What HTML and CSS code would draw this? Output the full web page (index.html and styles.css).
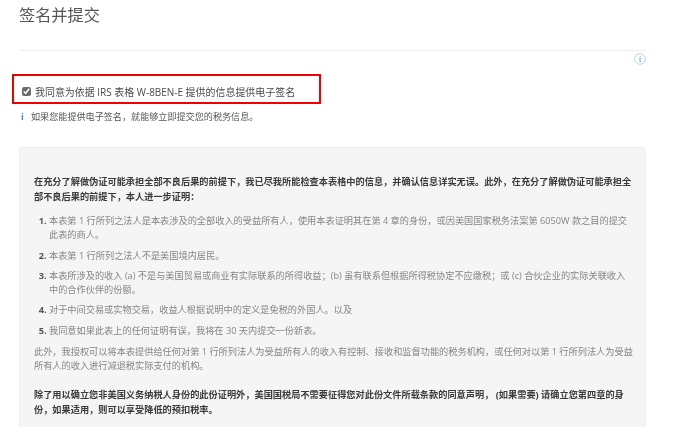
FILE: index.html
```html
<!DOCTYPE html>
<html lang="zh-CN">
<head>
<meta charset="utf-8">
<title>签名并提交</title>
<link rel="stylesheet" href="styles.css">
</head>
<body>
<main class="page">
  <h1 class="title">签名并提交</h1>
  <div class="rule-row">
    <svg class="info-circle" viewBox="0 0 12 12" aria-hidden="true">
      <circle cx="6" cy="6" r="5.3" fill="none" stroke="#9fcbe3" stroke-width="0.8"/>
      <path d="M6.3 2.9v.9M5.3 5.2h1l-.5 3.3h1" fill="none" stroke="#5ba4cf" stroke-width="0.9"/>
    </svg>
  </div>
  <div class="consent-box">
    <label class="consent">
      <input class="check" type="checkbox" checked>
      <span>我同意为依据 IRS 表格 W-8BEN-E 提供的信息提供电子签名</span>
    </label>
  </div>
  <p class="note"><span class="note-i">i</span>如果您能提供电子签名，就能够立即提交您的税务信息。</p>
  <section class="panel">
    <p class="strong first">在充分了解做伪证可能承担全部不良后果的前提下，我已尽我所能检查本表格中的信息，并确认信息详实无误。此外，在充分了解做伪证可能承担全部不良后果的前提下，本人进一步证明：</p>
    <ol class="list">
      <li>本表第 1 行所列之法人是本表涉及的全部收入的受益所有人，使用本表证明其在第 4 章的身份，或因美国国家税务法案第 6050W 款之目的提交此表的商人。</li>
      <li>本表第 1 行所列之法人不是美国境内居民。</li>
      <li>本表所涉及的收入 (a) 不是与美国贸易或商业有实际联系的所得收益；(b) 虽有联系但根据所得税协定不应缴税；或 (c) 合伙企业的实际关联收入中的合作伙伴的份额。</li>
      <li>对于中间交易或实物交易，收益人根据说明中的定义是免税的外国人。以及</li>
      <li>我同意如果此表上的任何证明有误，我将在 30 天内提交一份新表。</li>
    </ol>
    <p class="plain">此外，我授权可以将本表提供给任何对第 1 行所列法人为受益所有人的收入有控制、接收和监督功能的税务机构，或任何对以第 1 行所列法人为受益所有人的收入进行减退税实际支付的机构。</p>
    <p class="strong">除了用以确立您非美国义务纳税人身份的此份证明外，美国国税局不需要征得您对此份文件所载条款的同意声明， (如果需要) 请确立您第四章的身份，如果适用，则可以享受降低的预扣税率。</p>
  </section>
</main>
</body>
</html>
```

FILE: styles.css
```css
html, body {
  margin: 0;
  padding: 0;
  height: 427px;
  overflow: hidden;
  background: #fff;
}
body {
  font-family: "Open Sans", "Noto Sans CJK SC", sans-serif;
  color: #555;
}
.page {
  padding: 0 46px 0 19px;
  filter: blur(0.45px);
}
.title {
  margin: 0;
  height: 50px;
  padding-top: 4px;
  box-sizing: border-box;
  font-size: 16.2px;
  line-height: 22px;
  font-weight: 400;
  color: #555;
}
.rule-row {
  display: flex;
  justify-content: flex-end;
  border-top: 1px solid #eee;
  padding-top: 2px;
  height: 21px;
  box-sizing: border-box;
}
.info-circle {
  width: 12px;
  height: 12px;
}
.consent-box {
  width: 309px;
  height: 30px;
  margin: 3px 0 0 -7px;
  box-sizing: border-box;
  border: 2px solid #f00000;
  display: flex;
  align-items: center;
  padding: 5px 0 0 8px;
}
.consent {
  display: flex;
  align-items: center;
  gap: 4px;
  font-size: 9.96px;
  color: #4a4a4a;
  white-space: nowrap;
}
.check {
  width: 9px;
  height: 9px;
  margin: 0;
  accent-color: #6b6b6b;
}
.note {
  margin: 6px 0 0;
  display: flex;
  font-size: 9.1px;
  line-height: 14px;
  color: #555;
  white-space: nowrap;
}
.note-i {
  width: 12px;
  color: #2f8fc4;
  font-weight: 700;
  padding-left: 2px;
  box-sizing: border-box;
}
.panel {
  margin-top: 23px;
  height: 300px;
  box-sizing: border-box;
  padding: 26px 11.5px 0 14px;
  background: #f5f5f5;
  border: 1px solid #eee;
  border-radius: 3px;
  font-size: 9.2px;
  line-height: 14px;
}
.panel p {
  margin: 0;
}
.strong {
  font-weight: 700;
  color: #3a3a3a;
  line-height: 15px;
}
.plain {
  color: #858585;
}
.list {
  margin: 10px 0 7px;
  padding-left: 15px;
  line-height: 14.3px;
  color: #858585;
}
.list li {
  margin-bottom: 6px;
}
.list li::marker {
  font-weight: 700;
  color: #555;
}
.plain + .strong {
  margin-top: 14px;
}
```
